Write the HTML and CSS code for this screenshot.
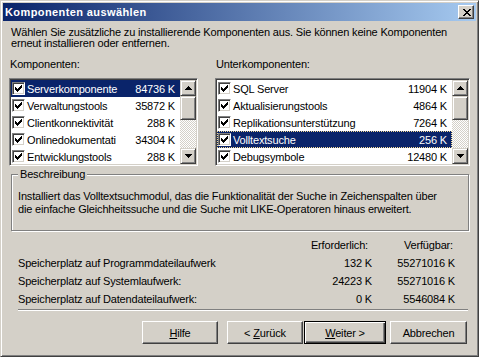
FILE: index.html
```html
<!DOCTYPE html>
<html lang="de">
<head>
  <meta charset="UTF-8">
  <title>Komponenten auswählen</title>
  <link rel="stylesheet" href="styles.css">
</head>
<body>
  <div class="window">
    <div class="titlebar">
      <span class="title">Komponenten auswählen</span>
      <span class="close">
        <svg width="8" height="7" viewBox="0 0 8 7" shape-rendering="crispEdges"><path d="M0 0h2v1h-2z M6 0h2v1h-2z M1 1h2v1h-2z M5 1h2v1h-2z M2 2h4v1h-4z M3 3h2v1h-2z M2 4h4v1h-4z M1 5h2v1h-2z M5 5h2v1h-2z M0 6h2v1h-2z M6 6h2v1h-2z"/></svg>
      </span>
    </div>

    <div class="content">
      <p class="intro">Wählen Sie zusätzliche zu installierende Komponenten aus. Sie können keine Komponenten<br>erneut installieren oder entfernen.</p>

      <div class="lists">
        <div class="col col-left">
          <div class="label">Komponenten:</div>
          <div class="listbox">
            <ul class="items">
              <li class="item selected"><span class="check"><svg width="7" height="7" viewBox="0 0 7 7" shape-rendering="crispEdges"><path d="M6 0h1v1h-1z M5 1h2v1h-2z M0 2h1v1h-1z M4 2h3v1h-3z M0 3h2v1h-2z M3 3h3v1h-3z M0 4h5v1h-5z M1 5h3v1h-3z M2 6h1v1h-1z"/></svg></span><span class="name">Serverkomponente</span><span class="size">84736 K</span></li>
              <li class="item"><span class="check"><svg width="7" height="7" viewBox="0 0 7 7" shape-rendering="crispEdges"><path d="M6 0h1v1h-1z M5 1h2v1h-2z M0 2h1v1h-1z M4 2h3v1h-3z M0 3h2v1h-2z M3 3h3v1h-3z M0 4h5v1h-5z M1 5h3v1h-3z M2 6h1v1h-1z"/></svg></span><span class="name">Verwaltungstools</span><span class="size">35872 K</span></li>
              <li class="item"><span class="check"><svg width="7" height="7" viewBox="0 0 7 7" shape-rendering="crispEdges"><path d="M6 0h1v1h-1z M5 1h2v1h-2z M0 2h1v1h-1z M4 2h3v1h-3z M0 3h2v1h-2z M3 3h3v1h-3z M0 4h5v1h-5z M1 5h3v1h-3z M2 6h1v1h-1z"/></svg></span><span class="name">Clientkonnektivität</span><span class="size">288 K</span></li>
              <li class="item"><span class="check"><svg width="7" height="7" viewBox="0 0 7 7" shape-rendering="crispEdges"><path d="M6 0h1v1h-1z M5 1h2v1h-2z M0 2h1v1h-1z M4 2h3v1h-3z M0 3h2v1h-2z M3 3h3v1h-3z M0 4h5v1h-5z M1 5h3v1h-3z M2 6h1v1h-1z"/></svg></span><span class="name">Onlinedokumentati</span><span class="size">34304 K</span></li>
              <li class="item"><span class="check"><svg width="7" height="7" viewBox="0 0 7 7" shape-rendering="crispEdges"><path d="M6 0h1v1h-1z M5 1h2v1h-2z M0 2h1v1h-1z M4 2h3v1h-3z M0 3h2v1h-2z M3 3h3v1h-3z M0 4h5v1h-5z M1 5h3v1h-3z M2 6h1v1h-1z"/></svg></span><span class="name">Entwicklungstools</span><span class="size">288 K</span></li>
            </ul>
            <div class="scrollbar">
              <span class="sb-btn"><svg width="7" height="4" viewBox="0 0 7 4" shape-rendering="crispEdges"><path d="M3 0h1v1h1v1h1v1h1v1H0V3h1V2h1V1h1z"/></svg></span>
              <span class="thumb"></span>
              <span class="track"></span>
              <span class="sb-btn"><svg width="7" height="4" viewBox="0 0 7 4" shape-rendering="crispEdges"><path d="M0 0h7v1H6v1H5v1H4v1H3V3H2V2H1V1H0z"/></svg></span>
            </div>
          </div>
        </div>

        <div class="col col-right">
          <div class="label">Unterkomponenten:</div>
          <div class="listbox">
            <ul class="items">
              <li class="item"><span class="check"><svg width="7" height="7" viewBox="0 0 7 7" shape-rendering="crispEdges"><path d="M6 0h1v1h-1z M5 1h2v1h-2z M0 2h1v1h-1z M4 2h3v1h-3z M0 3h2v1h-2z M3 3h3v1h-3z M0 4h5v1h-5z M1 5h3v1h-3z M2 6h1v1h-1z"/></svg></span><span class="name">SQL Server</span><span class="size">11904 K</span></li>
              <li class="item"><span class="check"><svg width="7" height="7" viewBox="0 0 7 7" shape-rendering="crispEdges"><path d="M6 0h1v1h-1z M5 1h2v1h-2z M0 2h1v1h-1z M4 2h3v1h-3z M0 3h2v1h-2z M3 3h3v1h-3z M0 4h5v1h-5z M1 5h3v1h-3z M2 6h1v1h-1z"/></svg></span><span class="name">Aktualisierungstools</span><span class="size">4864 K</span></li>
              <li class="item"><span class="check"><svg width="7" height="7" viewBox="0 0 7 7" shape-rendering="crispEdges"><path d="M6 0h1v1h-1z M5 1h2v1h-2z M0 2h1v1h-1z M4 2h3v1h-3z M0 3h2v1h-2z M3 3h3v1h-3z M0 4h5v1h-5z M1 5h3v1h-3z M2 6h1v1h-1z"/></svg></span><span class="name">Replikationsunterstützung</span><span class="size">7264 K</span></li>
              <li class="item selected focused"><span class="check"><svg width="7" height="7" viewBox="0 0 7 7" shape-rendering="crispEdges"><path d="M6 0h1v1h-1z M5 1h2v1h-2z M0 2h1v1h-1z M4 2h3v1h-3z M0 3h2v1h-2z M3 3h3v1h-3z M0 4h5v1h-5z M1 5h3v1h-3z M2 6h1v1h-1z"/></svg></span><span class="name">Volltextsuche</span><span class="size">256 K</span></li>
              <li class="item"><span class="check"><svg width="7" height="7" viewBox="0 0 7 7" shape-rendering="crispEdges"><path d="M6 0h1v1h-1z M5 1h2v1h-2z M0 2h1v1h-1z M4 2h3v1h-3z M0 3h2v1h-2z M3 3h3v1h-3z M0 4h5v1h-5z M1 5h3v1h-3z M2 6h1v1h-1z"/></svg></span><span class="name">Debugsymbole</span><span class="size">12480 K</span></li>
            </ul>
            <div class="scrollbar">
              <span class="sb-btn"><svg width="7" height="4" viewBox="0 0 7 4" shape-rendering="crispEdges"><path d="M3 0h1v1h1v1h1v1h1v1H0V3h1V2h1V1h1z"/></svg></span>
              <span class="thumb"></span>
              <span class="track"></span>
              <span class="sb-btn"><svg width="7" height="4" viewBox="0 0 7 4" shape-rendering="crispEdges"><path d="M0 0h7v1H6v1H5v1H4v1H3V3H2V2H1V1H0z"/></svg></span>
            </div>
          </div>
        </div>
      </div>

      <fieldset class="group">
        <legend>Beschreibung</legend>
        <p class="desc">Installiert das Volltextsuchmodul, das die Funktionalität der Suche in Zeichenspalten über<br>die einfache Gleichheitssuche und die Suche mit LIKE-Operatoren hinaus erweitert.</p>
      </fieldset>

      <div class="space">
        <span></span><span class="head head-req">Erforderlich:</span><span class="head head-free">Verfügbar:</span>
        <span>Speicherplatz auf Programmdateilaufwerk</span><span class="num">132 K</span><span class="num">55271016 K</span>
        <span>Speicherplatz auf Systemlaufwerk:</span><span class="num">24223 K</span><span class="num">55271016 K</span>
        <span>Speicherplatz auf Datendateilaufwerk:</span><span class="num">0 K</span><span class="num">5546084 K</span>
      </div>

      <hr class="sep">

      <div class="buttons">
        <button class="btn btn-help"><u>H</u>ilfe</button>
        <button class="btn btn-back">&lt; <u>Z</u>urück</button>
        <button class="btn btn-next default"><u>W</u>eiter &gt;</button>
        <button class="btn btn-cancel">Abbrechen</button>
      </div>
    </div>
  </div>
</body>
</html>
```

FILE: styles.css
```css
body {
  margin: 0;
  background-color: #d4d0c8;
  font-family: "Liberation Sans", Arial, sans-serif;
  font-size: 11px;
  letter-spacing: -0.17px;
  color: #000;
}

.window {
  width: 479px;
  height: 357px;
  box-sizing: border-box;
  border: 1px solid;
  border-color: #d4d0c8 #404040 #404040 #d4d0c8;
  box-shadow: inset 1px 1px #fff, inset -1px -1px #808080;
  padding: 2px;
  background-color: #d4d0c8;
}

/* title bar */
.titlebar {
  height: 18px;
  display: flex;
  align-items: center;
  justify-content: space-between;
  background: linear-gradient(to right, #0a246a, #a6caf0);
}

.title {
  color: #fff;
  font-weight: bold;
  letter-spacing: 0.4px;
  padding-left: 2px;
}

.close {
  width: 16px;
  height: 14px;
  box-sizing: border-box;
  margin-right: 2px;
  display: flex;
  align-items: center;
  justify-content: center;
  padding-left: 1px;
  border: 1px solid;
  border-color: #fff #404040 #404040 #fff;
  box-shadow: inset -1px -1px #808080;
  background-color: #d4d0c8;
}

.content {
  padding: 6px 0 0 6px;
}

.intro {
  margin: 0;
  padding-left: 2px;
  line-height: 11px;
}

/* lists */
.lists {
  display: flex;
  gap: 17px;
  margin-top: 9px;
}

.col-left {
  width: 189px;
}

.col-right {
  width: 255px;
}

.label {
  line-height: 13px;
  padding-left: 1px;
  margin-bottom: 7px;
}

.listbox {
  height: 88px;
  box-sizing: border-box;
  display: flex;
  border: 1px solid;
  border-color: #808080 #fff #fff #808080;
  box-shadow: inset 1px 1px #404040, inset -1px -1px #d4d0c8;
  padding: 1px;
  background-color: #fff;
}

.items {
  list-style: none;
  margin: 0;
  padding: 0;
  flex: 1;
  overflow: hidden;
}

.item {
  height: 17px;
  display: flex;
  align-items: center;
  padding-right: 5px;
  box-sizing: border-box;
}

.item.selected {
  background-color: #0a246a;
  color: #fff;
}

.item.focused {
  outline: 1px dotted #f5db95;
  outline-offset: -1px;
}

.check {
  width: 13px;
  height: 13px;
  box-sizing: border-box;
  margin-left: 1px;
  margin-right: 2px;
  display: flex;
  align-items: center;
  justify-content: center;
  border: 1px solid;
  border-color: #808080 #fff #fff #808080;
  box-shadow: inset 1px 1px #404040, inset -1px -1px #d4d0c8;
  background-color: #fff;
}

.name {
  flex: 1;
  white-space: nowrap;
}

.size {
  white-space: nowrap;
}

/* scrollbar */
.scrollbar {
  width: 16px;
  display: flex;
  flex-direction: column;
}

.sb-btn,
.thumb {
  box-sizing: border-box;
  border: 1px solid;
  border-color: #d4d0c8 #404040 #404040 #d4d0c8;
  box-shadow: inset 1px 1px #fff, inset -1px -1px #808080;
  background-color: #d4d0c8;
}

.sb-btn {
  height: 16px;
  display: flex;
  align-items: center;
  justify-content: center;
}

.thumb {
  height: 24px;
}

.track {
  flex: 1;
  background: repeating-conic-gradient(#fff 0 25%, #d4d0c8 0 50%) 0 0 / 2px 2px;
}

/* description group */
.group {
  margin: 2px 1px 0 2px;
  padding: 0 6px 14px 6px;
  border: 1px solid #808080;
  box-shadow: inset 1px 1px #fff, 1px 1px #fff;
  width: 458px;
  box-sizing: border-box;
}

.group legend {
  padding: 0 2px;
  line-height: 13px;
  background-color: #d4d0c8;
  position: relative;
}

.desc {
  margin: 9px 0 0 0;
  line-height: 13px;
}

/* disk space */
.space {
  display: grid;
  grid-template-columns: 1fr 80px 83px;
  grid-auto-rows: 18px;
  align-items: center;
  width: 437px;
  margin: 5px 0 0 9px;
}

.head-req {
  text-align: right;
  padding-right: 4px;
}

.head-free {
  text-align: right;
  padding-right: 2px;
}

.num {
  text-align: right;
}

.sep {
  margin: 1px 8px 0 9px;
  border: 0;
  border-top: 1px solid #808080;
  border-bottom: 1px solid #fff;
  height: 0;
}

/* buttons */
.buttons {
  display: flex;
  justify-content: flex-end;
  padding-right: 9px;
  margin-top: 10px;
}

.btn {
  height: 23px;
  box-sizing: border-box;
  padding: 0;
  font-family: inherit;
  font-size: 11px;
  letter-spacing: inherit;
  color: #000;
  border: 1px solid;
  border-color: #fff #404040 #404040 #fff;
  box-shadow: inset -1px -1px #808080;
  background-color: #d4d0c8;
}

.btn-help {
  width: 76px;
  margin-right: 9px;
}

.btn-back {
  width: 76px;
  margin-right: 1px;
}

.btn-next {
  width: 82px;
  margin-right: 4px;
}

.btn-cancel {
  width: 77px;
}

.btn.default {
  border: 1px solid #000;
  box-shadow: inset 1px 1px #fff, inset -1px -1px #404040, inset -2px -2px #808080;
}
```
